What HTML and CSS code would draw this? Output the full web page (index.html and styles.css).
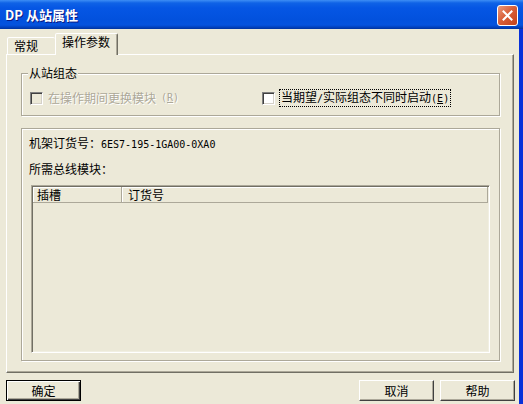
FILE: index.html
```html
<!DOCTYPE html>
<html lang="zh-CN">
<head>
    <meta charset="UTF-8">
    <title>DP 从站属性</title>
    <link rel="stylesheet" href="styles.css">
</head>
<body>
    <div class="window">
        <div class="titlebar">
            <span class="title">DP 从站属性</span>
            <span class="close">
                <svg width="13" height="13" viewBox="0 0 13 13"><path d="M2.5 2.5 L10.5 10.5 M10.5 2.5 L2.5 10.5" stroke="#fff" stroke-width="2" stroke-linecap="square"/></svg>
            </span>
        </div>

        <div class="client">
            <div class="tabs">
                <div class="tab first">常规</div>
                <div class="tab active">操作参数</div>
            </div>

            <div class="panel">
                <div class="group">
                    <div class="group-title">从站组态</div>
                    <div class="options">
                        <label class="option disabled"><span class="check"></span>在操作期间更换模块 <span class="lat">(<u>R</u>)</span></label>
                        <label class="option"><span class="check"></span><span class="focus">当期望<span class="lat">/</span>实际组态不同时启动<span class="lat">(<u>E</u>)</span></span></label>
                    </div>
                </div>

                <div class="group info">
                    <p class="line">机架订货号：<span class="lat">6ES7-195-1GA00-0XA0</span></p>
                    <p class="line second">所需总线模块：</p>
                    <div class="listbox">
                        <div class="list-head">
                            <span class="col slot">插槽</span>
                            <span class="col order">订货号</span>
                        </div>
                    </div>
                </div>
            </div>

            <div class="buttons">
                <button class="btn default">确定</button>
                <span class="spacer"></span>
                <button class="btn">取消</button>
                <button class="btn">帮助</button>
            </div>
        </div>
    </div>
</body>
</html>
```

FILE: styles.css
```css
html,
body{
    margin: 0;
}

*,
*::after,
*::before{
    box-sizing: border-box;
}

body{
    width: 523px;
    height: 404px;
    overflow: hidden;
    font: 12px/14px "Noto Sans CJK SC", sans-serif;
    color: #000;
}

.lat{
    font-family: "DejaVu Sans Mono", monospace;
    font-size: 10px;
}

.window{
    width: 523px;
    height: 404px;
    display: flex;
    flex-direction: column;
    background: #0831d9;
}

/* title bar */
.titlebar{
    height: 29px;
    flex: none;
    display: flex;
    align-items: center;
    justify-content: space-between;
    padding: 0 5px;
    background: linear-gradient(to bottom, #3d8ef5 0, #0f62e6 3px, #0556e4 8px, #0251dd 20px, #0553de 25px, #0243c2 27px, #00339e 29px);
}
.title{
    color: #fff;
    font-weight: bold;
    font-size: 13px;
    text-shadow: 1px 1px #0a1883;
    margin-top: 1px;
}
.close{
    align-self: flex-start;
    margin-top: 5px;
    width: 21px;
    height: 21px;
    border: 1px solid #fff;
    border-radius: 3px;
    display: flex;
    align-items: center;
    justify-content: center;
    background: linear-gradient(135deg, #ea9a7c 0%, #d9603a 45%, #c4411a 100%);
}

/* dialog */
.client{
    flex: 1;
    width: 519px;
    background: #ece9d8;
    display: flex;
    flex-direction: column;
}

.tabs{
    height: 21px;
    flex: none;
    margin-top: 4px;
    padding-left: 7px;
    display: flex;
    align-items: flex-end;
}
.tab{
    height: 17px;
    padding: 1px 0 0 6px;
    border: 1px solid;
    border-bottom: none;
    border-color: #fff #716f64 transparent #fff;
    border-radius: 2px 2px 0 0;
    box-shadow: inset -1px 0 #aca899;
    background: #ece9d8;
}
.tab.first{
    width: 48px;
    border-right: none;
    box-shadow: none;
}
.tab.active{
    width: 63px;
    height: 22px;
    margin-bottom: -1px;
    position: relative;
    z-index: 1;
}

.panel{
    margin-left: 6px;
    width: 508px;
    height: 319px;
    flex: none;
    padding: 18px 0 0 14px;
    border: 1px solid;
    border-color: #fff #716f64 #716f64 #fff;
    box-shadow: inset -1px -1px #aca899;
}

.group{
    width: 479px;
    border: 1px solid #aca899;
    box-shadow: inset 1px 1px #fff, 1px 1px #fff;
}
.group-title{
    width: fit-content;
    margin: -8px 0 0 6px;
    padding: 0 1px;
    background: #ece9d8;
}

.options{
    display: grid;
    grid-template-columns: 232px auto;
    align-items: center;
    height: 16px;
    margin-top: 9px;
    margin-bottom: 10px;
    padding-left: 8px;
}
.option{
    display: flex;
    align-items: center;
    gap: 5px;
    white-space: nowrap;
}
.option.disabled{
    color: #aca899;
    text-shadow: 1px 1px #fff;
}
.check{
    flex: none;
    width: 13px;
    height: 13px;
    border: 1px solid;
    border-color: #808080 #fff #fff #808080;
    box-shadow: inset 1px 1px #404040, inset -1px -1px #d4d0c8;
    background: #fff;
}
.disabled .check{
    background: #ece9d8;
}
.focus{
    margin-left: -1px;
    padding: 0 1px;
    border: 1px dotted #000;
}

.group.info{
    margin-top: 12px;
    padding: 7px 0 7px 7px;
}
.line{
    margin: 0;
}
.line.second{
    margin-top: 10px;
}

.listbox{
    margin: 9px 0 0 2px;
    width: 459px;
    height: 168px;
    border: 1px solid;
    border-color: #aca899 #fff #fff #aca899;
    box-shadow: inset 1px 1px #716f64, inset -1px -1px #f1efe2;
    padding: 1px;
}
.list-head{
    display: flex;
    height: 16px;
}
.col{
    padding: 1px 0 0 4px;
    border-right: 1px solid #aca899;
    border-bottom: 1px solid #aca899;
    box-shadow: inset 1px 1px #fff;
}
.col.slot{
    width: 89px;
}
.col.order{
    flex: 1;
    padding-left: 6px;
}

/* buttons */
.buttons{
    display: flex;
    gap: 6px;
    width: 509px;
    margin: 7px 0 0 6px;
}
.spacer{
    flex: 1;
}
.btn{
    width: 75px;
    height: 21px;
    padding: 0;
    font: inherit;
    color: #000;
    background: #ece9d8;
    border: 1px solid;
    border-color: #fff #404040 #404040 #fff;
    box-shadow: inset -1px -1px #aca899;
}
.btn.default{
    border-color: #000;
    box-shadow: inset 1px 1px #fff, inset -1px -1px #404040, inset -2px -2px #aca899;
}
```
